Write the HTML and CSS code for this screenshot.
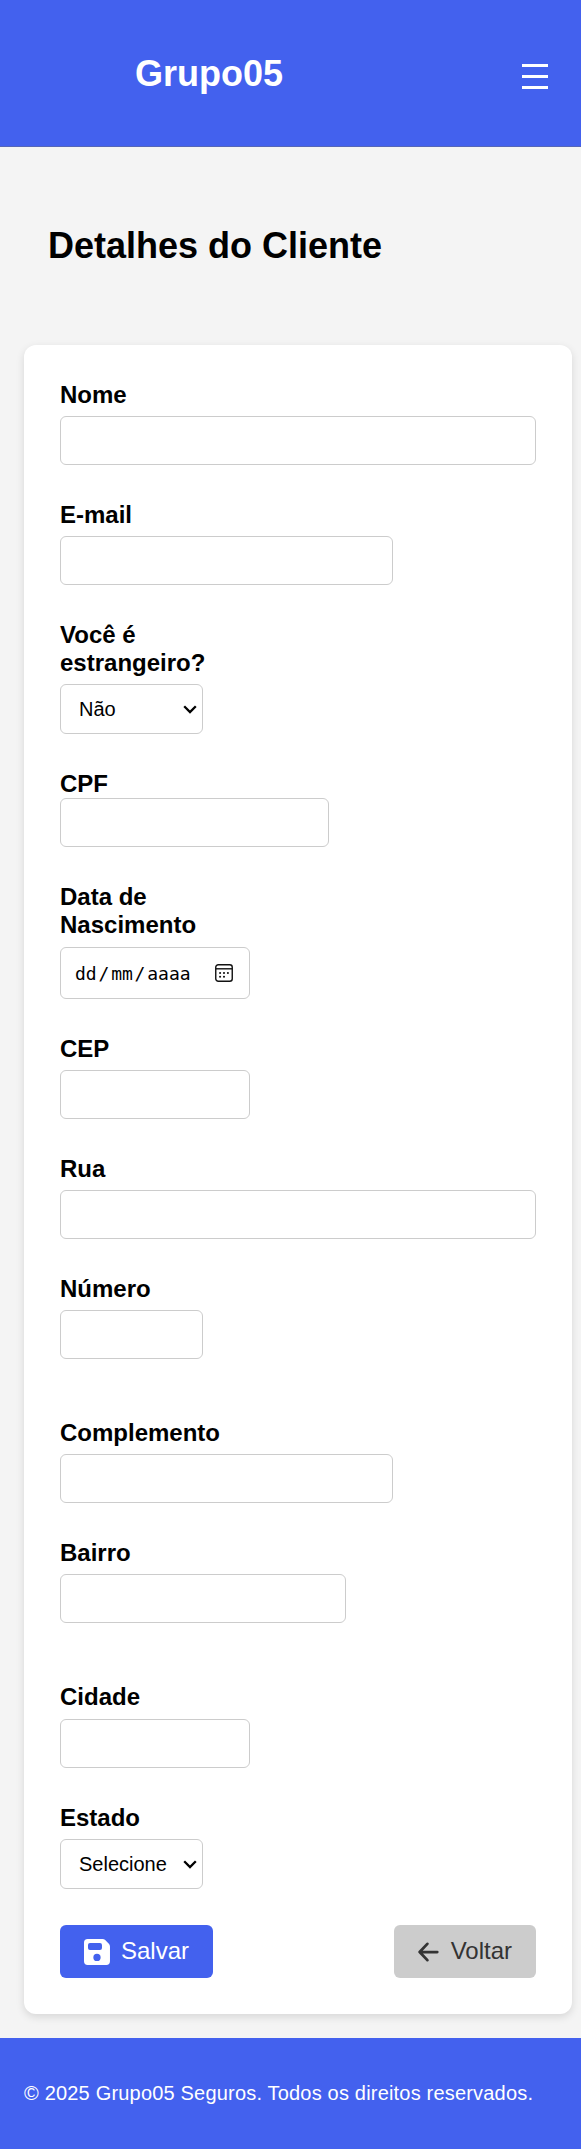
FILE: index.html
```html
<!DOCTYPE html>
<html lang="pt-BR">
<head>
<meta charset="utf-8">
<title>Detalhes do Cliente</title>
<link rel="stylesheet" href="styles.css">
</head>
<body>
<header class="header">
  <div class="logo">Grupo05</div>
  <button class="menu" aria-label="Menu"><span></span><span></span><span></span></button>
</header>
<main class="main">
  <h1 class="title">Detalhes do Cliente</h1>
  <form class="card">
    <div class="field"><label for="nome">Nome</label><input id="nome" class="w-full"></div>
    <div class="field"><label for="email">E-mail</label><input id="email" class="w-70"></div>
    <div class="field">
      <label>Você é<br>estrangeiro?</label>
      <div class="select">Não
        <svg width="14" height="9" viewBox="0 0 14 9"><path d="M1.2 1.3 7 7.1l5.8-5.8" fill="none" stroke="#000" stroke-width="2.3"/></svg>
      </div>
    </div>
    <div class="field tight"><label for="cpf">CPF</label><input id="cpf" class="w-cpf"></div>
    <div class="field loose">
      <label>Data de<br>Nascimento</label>
      <div class="date"><span class="date-text"><span>dd</span><span>/</span><span>mm</span><span>/</span><span>aaaa</span></span>
        <svg width="18" height="18" viewBox="0 0 18 18"><rect x=".75" y=".75" width="16.5" height="16.5" rx="2.5" fill="none" stroke="#111" stroke-width="1.4"/><path d="M1 4.8h16" stroke="#111" stroke-width="1.4"/><g fill="#111"><circle cx="5.1" cy="9" r="1.05"/><circle cx="9" cy="9" r="1.05"/><circle cx="12.9" cy="9" r="1.05"/><circle cx="5.1" cy="12.7" r="1.05"/><circle cx="9" cy="12.7" r="1.05"/></g></svg>
      </div>
    </div>
    <div class="field"><label for="cep">CEP</label><input id="cep" class="w-40"></div>
    <div class="field"><label for="rua">Rua</label><input id="rua" class="w-full"></div>
    <div class="field group-end"><label for="numero">Número</label><input id="numero" class="w-30"></div>
    <div class="field"><label for="complemento">Complemento</label><input id="complemento" class="w-70"></div>
    <div class="field group-end"><label for="bairro">Bairro</label><input id="bairro" class="w-60"></div>
    <div class="field loose"><label for="cidade">Cidade</label><input id="cidade" class="w-40"></div>
    <div class="field">
      <label>Estado</label>
      <div class="select">Selecione
        <svg width="14" height="9" viewBox="0 0 14 9"><path d="M1.2 1.3 7 7.1l5.8-5.8" fill="none" stroke="#000" stroke-width="2.3"/></svg>
      </div>
    </div>
    <div class="actions">
      <button type="button" class="btn save">
        <svg width="26" height="26" viewBox="0 0 26 26"><path fill="#fff" fill-rule="evenodd" d="M3.7 0H18.6a3.7 3.7 0 0 1 2.6 1.1l3.7 3.7A3.7 3.7 0 0 1 26 7.400V22.300a3.700 3.700 0 0 1-3.700 3.700H3.700A3.700 3.700 0 0 1 0 22.300V3.700A3.700 3.700 0 0 1 3.700 0ZM6 3.900A2 2 0 0 0 4 5.900V9.100a2 2 0 0 0 2 2H16a2 2 0 0 0 2-2V5.900a2 2 0 0 0-2-2ZM13 14.800a3.650 3.650 0 1 0 0 7.300a3.650 3.650 0 0 0 0-7.300Z"/></svg>
        <span>Salvar</span>
      </button>
      <button type="button" class="btn back">
        <svg width="21" height="20" viewBox="0 0 21 20"><path d="M9.500 1.700 1.700 10l7.800 8.300M2 10h17.600" fill="none" stroke="#333" stroke-width="2.800" stroke-linecap="round" stroke-linejoin="round"/></svg>
        <span>Voltar</span>
      </button>
    </div>
  </form>
</main>
<footer class="footer">© 2025 Grupo05 Seguros. Todos os direitos reservados.</footer>
</body>
</html>
```
FILE: styles.css
```css
* { box-sizing: border-box; }

body {
  margin: 0;
  background: #f4f4f4;
  color: #000;
  font-family: "Liberation Sans", Arial, sans-serif;
}

.header {
  display: flex;
  justify-content: space-between;
  align-items: center;
  height: 147px;
  padding: 0 33px 0 135px;
  background: #4361ee;
  border-bottom: 1px solid #5566b8;
}

.logo {
  margin-top: 2px;
  color: #fff;
  font-size: 36px;
  font-weight: bold;
  line-height: 42px;
}

.menu {
  display: flex;
  flex-direction: column;
  gap: 8px;
  width: 26px;
  margin-top: 7px;
  padding: 0;
  border: 0;
  background: none;
}

.menu span { height: 3px; background: #fff; }

.main { padding: 78px 9px 24px 24px; }

.title {
  margin: 0 0 78px;
  padding-left: 24px;
  font-size: 36px;
  line-height: 42px;
}

.card {
  padding: 36px;
  background: #fff;
  border-radius: 12px;
  box-shadow: 0 3px 9px rgba(0, 0, 0, .12);
}

.field { margin-bottom: 36px; }
.field.group-end { margin-bottom: 60px; }

.field label {
  display: block;
  margin-bottom: 7px;
  font-size: 24px;
  font-weight: bold;
  line-height: 28px;
}

.field.tight label { margin-bottom: 0; }
.field.loose label { margin-bottom: 8px; }

.field input, .select, .date {
  display: block;
  height: 49px;
  border: 1px solid #ccc;
  border-radius: 6px;
  background: #fff;
}

.field .w-full { width: 476px; }
.field .w-70 { width: 333px; }
.field .w-60 { width: 286px; }
.field .w-cpf { width: 269px; }
.field .w-40 { width: 190px; }
.field .w-30 { width: 143px; }

.select {
  display: flex;
  justify-content: space-between;
  align-items: center;
  width: 143px;
  height: 50px;
  padding: 0 5px 0 18px;
  font-size: 20px;
}

.date {
  display: flex;
  justify-content: space-between;
  align-items: center;
  width: 190px;
  height: 52px;
  padding: 0 16px 0 14px;
  font-family: "DejaVu Sans Mono", monospace;
  font-size: 18px;
}

.date-text { display: flex; gap: 1.8px; }

.actions { display: flex; justify-content: space-between; }

.btn {
  display: flex;
  align-items: center;
  height: 53px;
  padding: 0 24px;
  border: 0;
  border-radius: 6px;
  font-family: inherit;
  font-size: 24px;
}

.btn span { padding-bottom: 2px; }

.save { gap: 11px; width: 153px; background: #4361ee; color: #fff; }
.back { gap: 12px; width: 142px; background: #ccc; color: #333; }

.footer {
  height: 111px;
  padding: 43px 24px 0;
  background: #4361ee;
  color: #fff;
  font-size: 20px;
  letter-spacing: .19px;
  line-height: 24px;
  white-space: nowrap;
}
```
